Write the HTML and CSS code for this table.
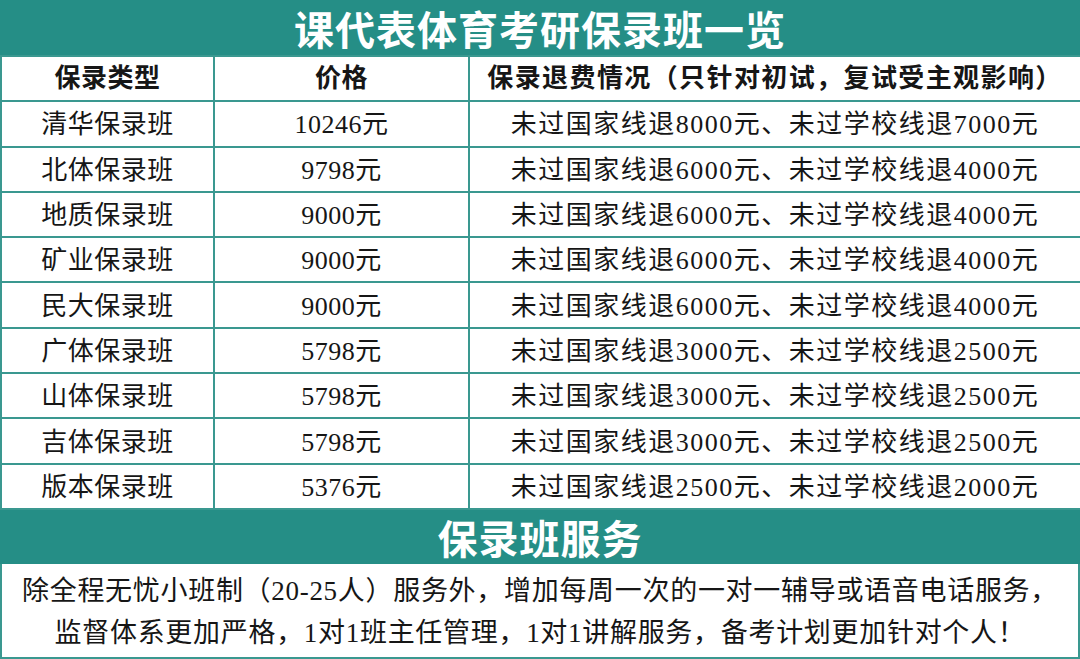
FILE: index.html
```html
<!DOCTYPE html>
<html lang="zh-CN">
<head>
<meta charset="utf-8">
<link rel="stylesheet" href="styles.css">
</head>
<body>
<div class="sheet">
  <div class="banner">课代表体育考研保录班一览</div>
  <table class="grid">
    <colgroup><col class="c1"><col class="c2"><col class="c3"></colgroup>
    <thead>
      <tr><th>保录类型</th><th>价格</th><th class="wide">保录退费情况（只针对初试，复试受主观影响）</th></tr>
    </thead>
    <tbody>
      <tr><td>清华保录班</td><td>10246元</td><td class="wide">未过国家线退8000元、未过学校线退7000元</td></tr>
      <tr><td>北体保录班</td><td>9798元</td><td class="wide">未过国家线退6000元、未过学校线退4000元</td></tr>
      <tr><td>地质保录班</td><td>9000元</td><td class="wide">未过国家线退6000元、未过学校线退4000元</td></tr>
      <tr><td>矿业保录班</td><td>9000元</td><td class="wide">未过国家线退6000元、未过学校线退4000元</td></tr>
      <tr><td>民大保录班</td><td>9000元</td><td class="wide">未过国家线退6000元、未过学校线退4000元</td></tr>
      <tr><td>广体保录班</td><td>5798元</td><td class="wide">未过国家线退3000元、未过学校线退2500元</td></tr>
      <tr><td>山体保录班</td><td>5798元</td><td class="wide">未过国家线退3000元、未过学校线退2500元</td></tr>
      <tr><td>吉体保录班</td><td>5798元</td><td class="wide">未过国家线退3000元、未过学校线退2500元</td></tr>
      <tr><td>版本保录班</td><td>5376元</td><td class="wide">未过国家线退2500元、未过学校线退2000元</td></tr>
    </tbody>
  </table>
  <div class="banner banner-sub">保录班服务</div>
  <div class="note">
    <p>除全程无忧小班制（20-25人）服务外，增加每周一次的一对一辅导或语音电话服务，</p>
    <p>监督体系更加严格，1对1班主任管理，1对1讲解服务，备考计划更加针对个人！</p>
  </div>
</div>
</body>
</html>
```
FILE: styles.css
```css
html, body {
  margin: 0;
  padding: 0;
  background: #ffffff;
}
body {
  font-family: "Liberation Serif", "Noto Sans CJK SC", serif;
  color: #161616;
}
.sheet {
  width: 1080px;
  height: 659px;
  overflow: hidden;
}
.banner {
  background: #258e86;
  color: #ffffff;
  height: 55px;
  display: flex;
  align-items: center;
  justify-content: center;
  font-family: "Noto Sans CJK SC", sans-serif;
  font-weight: 700;
  font-size: 40px;
  letter-spacing: 1px;
  line-height: 1;
}
.banner-sub {
  height: 54px;
}
.grid {
  width: 1080px;
  border-collapse: collapse;
  table-layout: fixed;
  border: 2px solid #3a9890;
}
.c1 { width: 213px; }
.c2 { width: 255px; }
.c3 { width: 612px; }
.grid th, .grid td {
  border: 2px solid #3a9890;
  height: 43.3px;
  padding: 0;
  text-align: center;
  vertical-align: middle;
  font-size: 26px;
  line-height: 1;
  white-space: nowrap;
}
.grid th {
  font-weight: 700;
  letter-spacing: 0.5px;
}
.grid th.wide {
  letter-spacing: 1.4px;
}
.grid td {
  height: 40.3px;
  font-weight: 400;
  letter-spacing: 0.5px;
  padding-top: 3px;
}
.grid td.wide {
  letter-spacing: 1.5px;
}
.note {
  border: 2px solid #3a9890;
  border-top: none;
  height: 95px;
  box-sizing: border-box;
  display: flex;
  flex-direction: column;
  justify-content: center;
  align-items: center;
  font-size: 27px;
  letter-spacing: 0.7px;
  line-height: 42px;
  padding-top: 4px;
}
.note p {
  margin: 0;
  white-space: nowrap;
}
```
